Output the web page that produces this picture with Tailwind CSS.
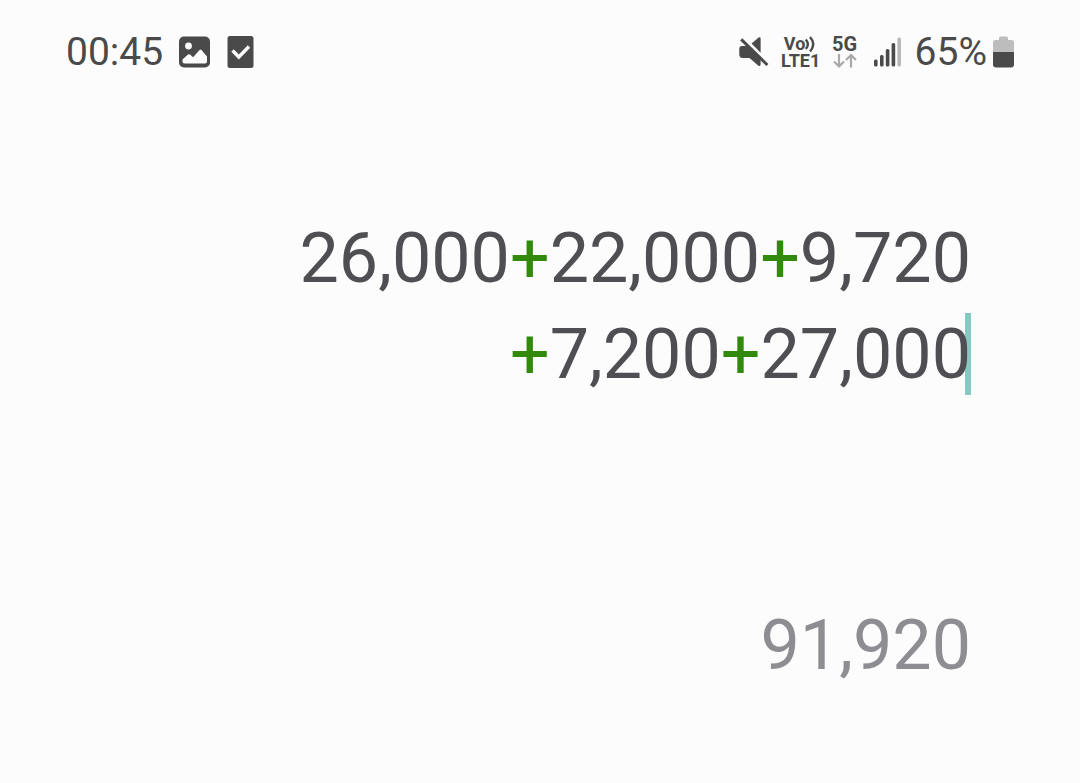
<!DOCTYPE html>
<html lang="en">

<head>
    <meta charset="UTF-8">
    <meta name="viewport" content="width=device-width, initial-scale=1.0">
    <title>Calculator</title>
    <script src="https://cdn.jsdelivr.net/npm/@tailwindcss/browser@4"></script>
</head>

<body class="bg-[#fcfcfc] min-h-screen font-['Roboto',sans-serif]">
    <!-- Status bar -->
    <header class="flex items-center justify-between pt-7 px-[66px] text-[#4a4a4a]">
        <div class="flex items-center gap-4">
            <time class="text-[39px] leading-12">00:45</time>
            <svg class="w-8 h-8" viewBox="0 0 32 32" aria-label="Screenshot saved">
                <rect x="0" y="0.5" width="31" height="31" rx="5" fill="currentColor" />
                <circle cx="9.5" cy="10" r="3.4" fill="#fcfcfc" />
                <path d="M3.5 23.5 L9 18.5 Q10 17.8 11 18.6 L14.1 21.2 L20.3 14.2 Q21.5 13 22.7 14.2 L28 20.5 V25.5 Q28 27.5 26 27.5 H5.5 Q3.5 27.5 3.5 25.5 Z" fill="#fcfcfc" />
            </svg>
            <svg class="w-7 h-8" viewBox="0 0 28 32" aria-label="Task done">
                <rect x="0.5" y="0" width="26" height="32" rx="2.5" fill="currentColor" />
                <path d="M5.5 14.5 L11.8 21 L22 10.5" fill="none" stroke="#fcfcfc" stroke-width="3.4" />
            </svg>
        </div>
        <div class="flex items-center">
            <svg class="w-[30px] h-[30px] mr-3" viewBox="0 0 30 30" fill="currentColor" aria-label="Muted">
                <path d="M12.6 6.4 L19.6 0.6 Q21.6 -0.4 21.6 1.6 V15.8 Z" />
                <path d="M3 9 H8 L21.6 22.5 V27.6 Q21.4 29.8 19.4 28.7 L10.5 20.9 H3.4 Q0.3 20.9 0.3 17.8 V11.6 Q0.3 9 3 9 Z" />
                <path d="M2.2 2.4 L28.4 28" fill="none" stroke="currentColor" stroke-width="3" />
            </svg>
            <div class="flex flex-col items-center w-10 mr-[11px] pt-0.5 text-[18px] font-bold">
                <span class="flex items-center leading-4 h-4">Vo<svg class="w-3 h-4" viewBox="0 0 12 16" fill="none" stroke="currentColor" stroke-width="2.4">
                        <path d="M0.8 3.5 Q5 8 0.8 13" />
                        <path d="M5 1 Q11.5 8 5 15.5" />
                    </svg></span>
                <span class="leading-[18px]">LTE1</span>
            </div>
            <div class="flex flex-col items-center w-[26px] mr-4 pt-0.5 text-[20px] leading-4 font-bold">
                <span>5G</span>
                <svg class="w-6 h-[18px]" viewBox="0 0 24 18" fill="none" stroke="#a9a9a9" stroke-width="2.2" aria-label="Data">
                    <path d="M6 2 V14.5 M1 9.5 L6 14.5 L11 9.5" />
                    <path d="M18 15.5 V3 M13 8 L18 3 L23 8" />
                </svg>
            </div>
            <svg class="w-7 h-[30px] mr-[13px]" viewBox="0 0 28 30" fill="currentColor" aria-label="Signal">
                <rect x="0" y="22.5" width="3.6" height="7" rx="1.5" />
                <rect x="6" y="18" width="3.6" height="11.5" rx="1.5" />
                <rect x="11.8" y="12" width="3.6" height="17.5" rx="1.5" />
                <rect x="17.6" y="6" width="3.6" height="23.5" rx="1.5" />
                <rect x="23.4" y="0.5" width="3.6" height="29" rx="1.5" fill="#b9b9b9" />
            </svg>
            <span class="text-[39px] leading-12 mr-[6px]">65%</span>
            <svg class="w-[21px] h-8" viewBox="0 0 21 32" aria-label="Battery">
                <path d="M6 4 V2 Q6 0.5 7.5 0.5 H13.5 Q15 0.5 15 2 V4 H18.5 Q21 4 21 6.5 V16 H0 V6.5 Q0 4 2.5 4 Z" fill="#bdbdbd" />
                <path d="M0 16 H21 V28.5 Q21 31.5 18 31.5 H3 Q0 31.5 0 28.5 Z" fill="currentColor" />
            </svg>
        </div>
    </header>

    <!-- Calculator display -->
    <main class="pt-[134px] pr-[109px] text-right text-[70px] leading-24">
        <div class="text-[#4f4f53]">
            <p>26,000<span class="text-[#328a0c]">+</span>22,000<span class="text-[#328a0c]">+</span>9,720</p>
            <p class="relative"><span class="absolute right-0 top-[7px] w-1.5 h-[82px] bg-[#84cac2]"></span><span class="relative"><span class="text-[#328a0c]">+</span>7,200<span class="text-[#328a0c]">+</span>27,000</span></p>
        </div>
        <output class="block mt-[195px] text-[#8e8e92]">91,920</output>
    </main>
</body>

</html>
